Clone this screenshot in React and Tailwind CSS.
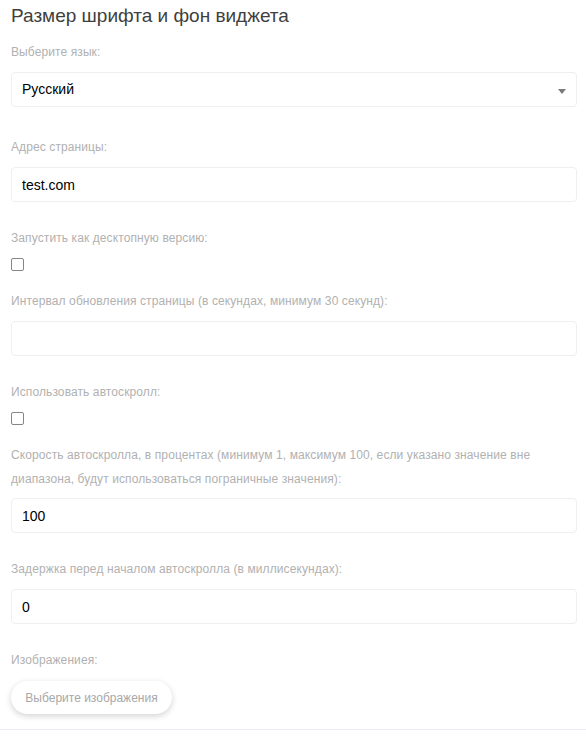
import React from 'react';

const Label = ({ children, className = '' }) => (
  <label className={`block text-[12px] leading-[24px] tracking-[0.1px] text-[#b1b1b1] ${className}`}>{children}</label>
);

const TextInput = ({ value, className = '' }) => (
  <input
    type="text"
    defaultValue={value}
    className={`block w-full h-[35px] px-[10px] rounded-[4px] border border-[#efefef] bg-white text-[14px] text-black outline-none ${className}`}
  />
);

const Checkbox = ({ className = '' }) => (
  <div className={`w-[13px] h-[13px] rounded-[2px] border border-[#858585] bg-white ${className}`} />
);

export default function App() {
  return (
    <div className="min-h-[742px] bg-white font-['Liberation_Sans',Arial,sans-serif]">
      <div className="pl-[11px] pr-[9px]">
        <h1 className="text-[19px] leading-[32px] text-[#3f3f3f] font-normal">Размер шрифта и фон виджета</h1>

        <Label className="mt-[8px]">Выберите язык:</Label>
        <div className="relative mt-[8px] h-[35px] rounded-[4px] border border-[#efefef] bg-white flex items-center px-[10px]">
          <span className="text-[14px] text-black">Русский</span>
          <span className="absolute right-[10px] top-[16px] w-0 h-0 border-l-[4px] border-r-[4px] border-t-[5px] border-l-transparent border-r-transparent border-t-[#7a7a7a]" />
        </div>

        <Label className="mt-[28px]">Адрес страницы:</Label>
        <TextInput value="test.com" className="mt-[8px]" />

        <Label className="mt-[24px]">Запустить как десктопную версию:</Label>
        <Checkbox className="mt-[8px]" />

        <Label className="mt-[18px]">Интервал обновления страницы (в секундах, минимум 30 секунд):</Label>
        <TextInput value="" className="mt-[8px]" />

        <Label className="mt-[24px]">Использовать автоскролл:</Label>
        <Checkbox className="mt-[8px]" />

        <Label className="mt-[18px]">
          Скорость автоскролла, в процентах (минимум 1, максимум 100, если указано значение вне диапазона, будут использоваться пограничные значения):
        </Label>
        <TextInput value="100" className="mt-[7px] h-[34px]" />

        <Label className="mt-[24px]">Задержка перед началом автоскролла (в миллисекундах):</Label>
        <TextInput value="0" className="mt-[8px] h-[34px]" />

        <Label className="mt-[24px]">Изображениея:</Label>
        <button className="mt-[9px] h-[33px] w-[161px] rounded-full bg-white text-[12px] text-[#a8a8a8] shadow-[0_2px_6px_rgba(0,0,0,0.18)]">
          Выберите изображения
        </button>
      </div>
      <div className="mt-[15px] border-t border-[#ececf2]" />
    </div>
  );
}
